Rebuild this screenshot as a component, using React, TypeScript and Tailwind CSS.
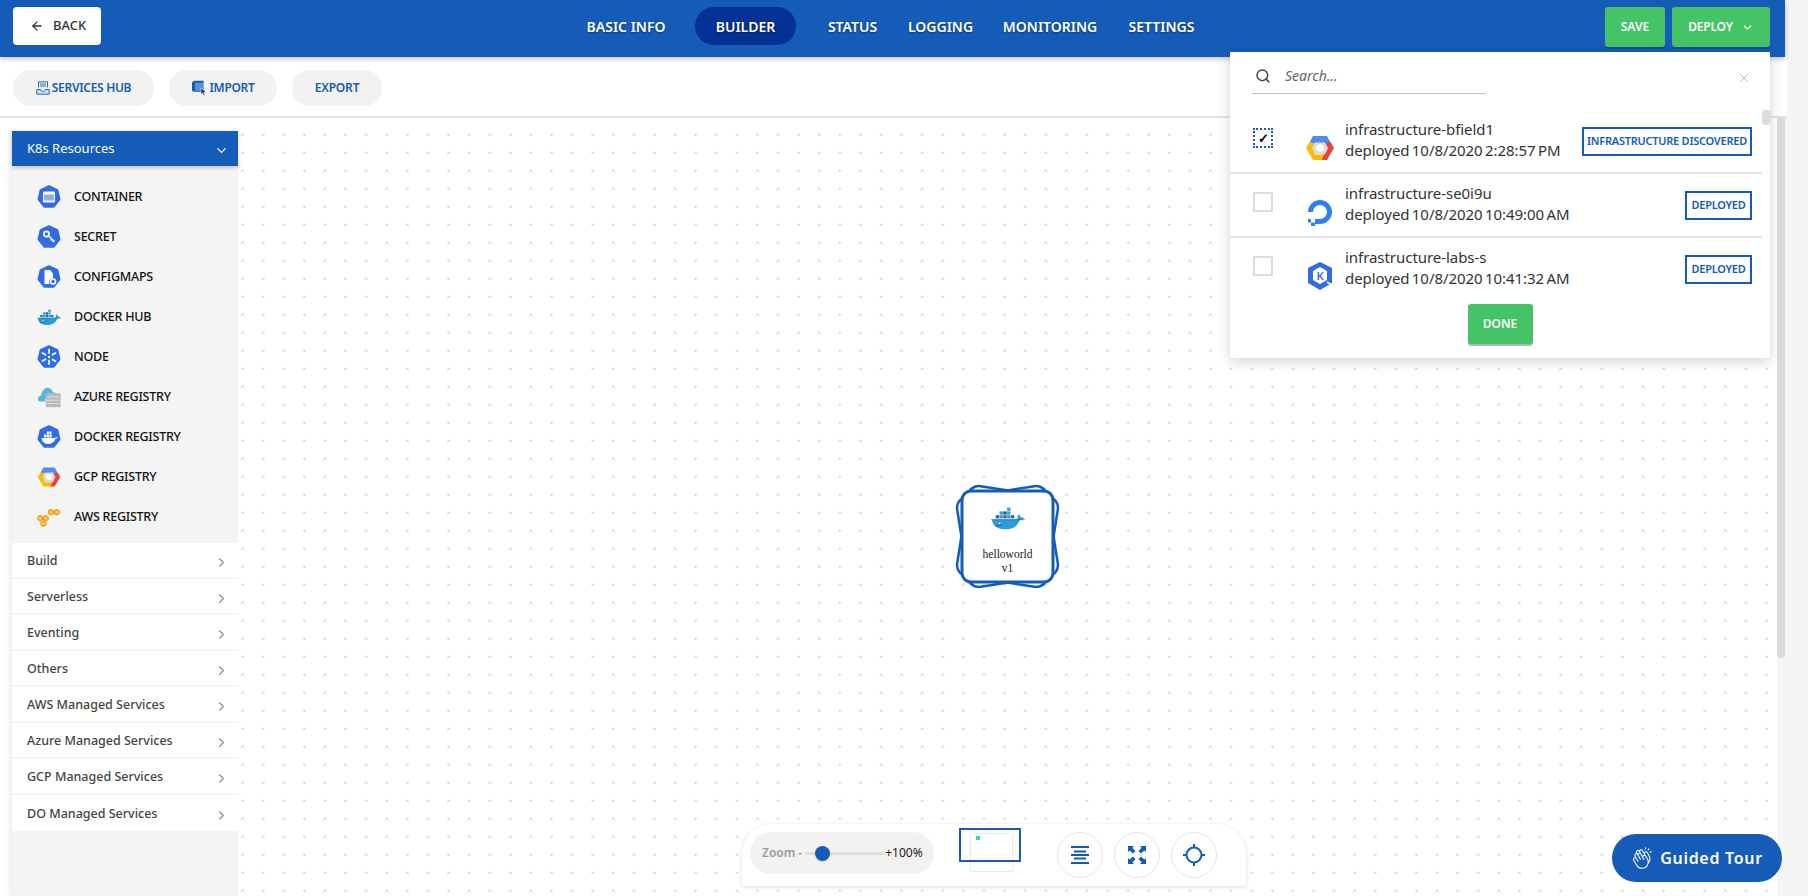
import React from "react";
import { ArrowLeft, ChevronDown, ChevronRight, Search, X } from "lucide-react";
import { PiHandsClappingLight } from "react-icons/pi";

const Hept = ({ children, size = 24 }: { children?: React.ReactNode; size?: number }) => (
  <svg width={size} height={size} viewBox="0 0 24 24">
    <polygon points="12,1.2 20.4,5.2 22.5,14.3 16.7,21.7 7.3,21.7 1.5,14.3 3.6,5.2" fill="#326ce5" stroke="#326ce5" strokeWidth="2" strokeLinejoin="round" />
    {children}
  </svg>
);

const Whale = ({ w = 26, h = 20 }: { w?: number; h?: number }) => (
  <svg width={w} height={h} viewBox="0 0 36 26">
    <g fill="#1f6fb5">
      <rect x="5" y="10" width="3.6" height="3.4" />
      <rect x="13" y="10" width="3.6" height="3.4" />
      <rect x="21" y="10" width="3.6" height="3.4" />
    </g>
    <g fill="#3a9ad9">
      <rect x="9" y="10" width="3.6" height="3.4" />
      <rect x="17" y="10" width="3.6" height="3.4" />
      <rect x="9" y="6" width="3.6" height="3.4" />
      <rect x="17" y="6" width="3.6" height="3.4" />
      <rect x="17" y="2" width="3.6" height="3.4" />
    </g>
    <rect x="13" y="6" width="3.6" height="3.4" fill="#1a5f9e" />
    <path d="M1 14.5h24c1.400 0 2.600-.4 3.400-1-.5-1.400-.4-3.400.7-4.500 1.300.9 2 2.200 2.100 3.400 1.300-.4 2.800-.1 3.800.7-1 1.600-2.800 2.200-4.600 2.100C28.400 21.500 23 25 15.500 25 7 25 1.500 21 1 14.500z" fill="#2d9cdb" />
    <circle cx="9" cy="18.500" r="1" fill="#fff" />
    <path d="M4 21c3 .5 6 0 8-1.500" stroke="#12507f" strokeWidth=".8" fill="none" />
    <path d="M0 14.800h36" stroke="#12507f" strokeWidth=".6" />
  </svg>
);

const Gcp = ({ size = 30 }: { size?: number }) => (
  <svg width={size} height={size} viewBox="0 0 30 30">
    <polygon points="8,3 22,3 25.500,9.500 20,11 10,11 4.500,9.500" fill="#4f8cf0" />
    <polygon points="25.500,9 29,15 22,27 16,27 20.500,16 20,10.500" fill="#ea4335" />
    <polygon points="4.500,9 1,15 8,27 17,27 19,21.500 10.500,21.500 9.500,10.500" fill="#fbbc05" />
    <polygon points="10,9.500 20,9.500 23,15 20,21.500 10,21.500 7,15" fill="#dcdcdc" />
    <circle cx="15" cy="15" r="3.800" fill="#fff" />
  </svg>
);

const Icons: Record<string, React.ReactNode> = {
  container: (
    <Hept>
      <rect x="6" y="6.500" width="12" height="11" rx="1.200" fill="#fff" />
      <path d="M8 9.500v6M10 9.500v6M12 9.500v6M14 9.500v6M16 9.500v6" stroke="#326ce5" strokeWidth="1.100" />
    </Hept>
  ),
  secret: (
    <Hept>
      <circle cx="9.500" cy="9" r="2.600" fill="none" stroke="#fff" strokeWidth="1.600" />
      <path d="M11.500 11l6 5.500M15 14l-1.400 1.600M17 15.500l-1.300 1.500" stroke="#fff" strokeWidth="1.500" />
    </Hept>
  ),
  config: (
    <Hept>
      <path d="M7.500 5h5.500l3 3.500v4.500a4 4 0 0 0-3.500 6H7.500z" fill="#fff" />
      <circle cx="16" cy="16.500" r="2.500" fill="none" stroke="#fff" strokeWidth="1.600" />
    </Hept>
  ),
  docker: <Whale w={24} h={18} />,
  node: (
    <Hept>
      <g stroke="#fff" strokeWidth="1.700" strokeLinecap="round">
        <path d="M12 4.500v3.500M12 15.500v3.500M5.500 8l3 1.800M15.500 14.500l3 1.800M5.500 16l3-1.800M15.500 9.800l3-1.800" />
      </g>
      <circle cx="12" cy="12" r="1.200" fill="#fff" />
    </Hept>
  ),
  azure: (
    <svg width="26" height="24" viewBox="0 0 26 24">
      <path d="M1 15c0-3 2-4.500 3.500-4.500C5 6 8 2 11 2c3 0 5.500 2 6.500 5 1.500 0 3 .5 4 1.500V14H9v3H4c-2 0-3-1-3-2z" fill="#5bb5dc" />
      <rect x="9.500" y="8" width="16" height="15" fill="#b5b5b5" />
      <path d="M9.500 12h16M9.500 15.500h16M9.500 19h16" stroke="#e8e8e8" strokeWidth=".9" />
      <path d="M13 8v15M17 8v15M21 8v15" stroke="#d8d8d8" strokeWidth=".5" />
    </svg>
  ),
  dockerReg: (
    <Hept>
      <path d="M4.500 13h12.500c1 0 1.500-.4 2-.8.7.3 1.500.3 2 .1-.6 1-1.500 1.500-2.500 1.500C17.500 17 15 19 11.500 19 7.500 19 4.800 16.500 4.500 13z" fill="#fff" />
      <path d="M7 9.500h2.200v3H7zM9.700 9.500h2.200v3H9.700zM12.400 9.500h2.200v3h-2.200zM9.700 6.500h2.200v2.500H9.700zM12.400 6.500h2.200v2.500h-2.200z" fill="#fff" />
    </Hept>
  ),
  gcp: <Gcp size={26} />,
  aws: (
    <svg width="26" height="24" viewBox="0 0 26 24">
      <g fill="#fbd08a" stroke="#f79400" strokeWidth="1.400">
        <path d="M12.500 5.500l2.500-1.500 2.500 1.500v2.500l-2.500 1.500-2.500-1.500zM19 5.500l2.500-1.500 2.500 1.500v2.500l-2.500 1.500-2.500-1.500zM1 12l2.500-1.500L6 12v2.500L3.500 16 1 14.500zM7 12l2.500-1.500L12 12v2.500L9.500 16 7 14.500zM4.500 18l2.500-1.500L9.500 18v2.500L7 22l-2.500-1.500z" />
      </g>
    </svg>
  ),
};

const items: [string, string][] = [
  ["container", "CONTAINER"],
  ["secret", "SECRET"],
  ["config", "CONFIGMAPS"],
  ["docker", "DOCKER HUB"],
  ["node", "NODE"],
  ["azure", "AZURE REGISTRY"],
  ["dockerReg", "DOCKER REGISTRY"],
  ["gcp", "GCP REGISTRY"],
  ["aws", "AWS REGISTRY"],
];

const groups = ["Build", "Serverless", "Eventing", "Others", "AWS Managed Services", "Azure Managed Services", "GCP Managed Services", "DO Managed Services"];

const nav: [string, string, boolean][] = [
  ["BASIC INFO", "w-[78px]", false],
  ["BUILDER", "w-[101px]", true],
  ["STATUS", "w-[53px]", false],
  ["LOGGING", "w-[63px]", false],
  ["MONITORING", "w-[96px]", false],
  ["SETTINGS", "w-[67px]", false],
];

const Infra = ({ icon, name, date, badge, wide, checked, border }: { icon: React.ReactNode; name: string; date: string; badge: string; wide?: boolean; checked?: boolean; border?: boolean }) => (
  <div className={`flex h-[64px] w-[532px] pl-[23px] ${border ? "border-b-2 border-[#e3e3e3]" : ""}`}>
    {checked ? (
      <div className="mt-[18px] flex h-[20px] w-[20px] items-center justify-center border-2 border-dotted border-[#155cb8] text-[13px] font-bold leading-none text-black">✓</div>
    ) : (
      <div className="mt-[18px] h-[20px] w-[20px] border-2 border-[#dcdcdc]" />
    )}
    <div className="mt-[23px] ml-[32px] flex h-[30px] w-[30px] items-center justify-center">{icon}</div>
    <div className="mt-[9px] ml-[10px] flex flex-col text-[15px] leading-[21px] tracking-[-0.05px] text-[#333] [word-spacing:-1.500px]">
      <span>{name}</span>
      <span>{date}</span>
    </div>
    <div className={`mt-[17px] ml-auto mr-[10px] flex h-[29px] items-center justify-center border-2 border-[#155cb8] text-[11px] font-semibold tracking-[-0.25px] text-[#155cb8] ${wide ? "w-[170px]" : "w-[67px]"}`}>
      {badge}
    </div>
  </div>
);

export default function App() {
  return (
    <div className="relative flex h-[896px] w-[1808px] flex-col overflow-hidden bg-[#f5f5f5] font-['Noto_Sans',sans-serif]">
      <header className="relative z-20 flex h-[57px] w-[1785px] shrink-0 items-start bg-[#155cb8] pt-[7px] shadow-[0_2px_5px_rgba(0,0,0,0.25)]">
        <button className="ml-[13px] flex h-[38px] w-[88px] items-center rounded-[4px] bg-white pl-[17px] text-[13px] font-medium text-[#333]">
          <ArrowLeft size={14} strokeWidth={2.2} className="mr-[9px]" />
          BACK
        </button>
        <nav className="ml-[486px] flex gap-[30px]">
          {nav.map(([t, w, a]) => (
            <div key={t} className={`flex h-[38px] items-center justify-center whitespace-nowrap text-[14px] font-semibold text-white [text-shadow:0_1px_2px_rgba(0,0,0,0.4)] ${w} ${a ? "rounded-[19px] bg-[#033294]" : ""}`}>
              {t}
            </div>
          ))}
        </nav>
        <button className="ml-auto flex h-[40px] w-[60px] items-center justify-center rounded-[3px] bg-[#45c367] text-[12px] font-semibold text-white shadow-[0_2px_0_#0d4a94]">SAVE</button>
        <button className="mr-[15px] ml-[7px] flex h-[40px] w-[98px] items-center justify-center gap-[8px] rounded-[3px] bg-[#45c367] text-[12px] font-semibold tracking-[-0.2px] text-white shadow-[0_2px_0_#0d4a94]">
          DEPLOY <ChevronDown size={13} strokeWidth={2.5} />
        </button>
      </header>

      <div className="flex h-[61px] w-[1787px] shrink-0 items-start gap-[15px] border-b-2 border-[#e3e3e3] bg-white pt-[13px] pl-[13px]">
        <button className="flex h-[36px] w-[141px] items-center justify-center gap-[2px] rounded-[18px] bg-[#f3f2f1] text-[12px] font-semibold tracking-[-0.3px] text-[#155cb8]">
          <svg width="14" height="14" viewBox="0 0 14 14" fill="none" stroke="#155cb8" strokeWidth="0.9">
            <path d="M.8 8.500v4.700h12.400V8.500H9.500c-.4 1.300-1.300 2-2.500 2s-2.100-.7-2.500-2z" fill="#cfe0f5" />
            <path d="M2.500 6.500V.8h9v5.700M4 3h6M4 5h6" />
          </svg>
          SERVICES HUB
        </button>
        <button className="flex h-[36px] w-[108px] items-center justify-center gap-[2px] rounded-[18px] bg-[#f3f2f1] text-[12px] font-semibold tracking-[-0.3px] text-[#155cb8]">
          <svg width="16" height="16" viewBox="0 0 16 16">
            <path d="M1 2.500L3 .8h9.500v11H3l-2-1z" fill="#155cb8" />
            <rect x="4" y="2.800" width="8" height="8" fill="#5a90d6" />
            <path d="M10 8l5 4-2.200.4 1.200 2.400-1.200.6-1.100-2.400-1.700 1.500z" fill="#10376e" stroke="#fff" strokeWidth=".5" />
          </svg>
          IMPORT
        </button>
        <button className="flex h-[36px] w-[90px] items-center justify-center rounded-[18px] bg-[#f3f2f1] text-[12px] font-semibold tracking-[-0.2px] text-[#155cb8]">EXPORT</button>
      </div>

      <main className="relative flex min-h-0 w-[1777px] flex-1 bg-white bg-[radial-gradient(circle,#d4d4d4_1px,transparent_1.3px)] bg-[length:20.6px_18px] bg-[position:5.8px_7.7px] pt-[13px] pl-[12px]">
        <aside className="flex w-[226px] flex-col bg-[#f4f4f4] shadow-[-4px_0_6px_rgba(0,0,0,0.06)]">
          <div className="z-10 flex h-[35px] items-center justify-between bg-[#155cb8] pr-[9px] pl-[15px] text-[13px] text-white shadow-[0_2px_4px_rgba(0,0,0,0.2)]">
            K8s Resources
            <ChevronDown size={15} strokeWidth={2} className="mt-[4px]" />
          </div>
          <div className="flex h-[377px] flex-col pt-[11px]">
            {items.map(([k, t]) => (
              <div key={t} className="flex h-[40px] items-center pl-[25px]">
                <span className="flex w-[24px] justify-center">{Icons[k]}</span>
                <span className="ml-[13px] text-[12.5px] font-medium tracking-[-0.25px] text-[#111]">{t}</span>
              </div>
            ))}
          </div>
          <div className="flex flex-col bg-white">
            {groups.map((g, i) => (
              <div key={g} className={`flex h-[36px] items-center justify-between pr-[9px] pl-[15px] text-[12.5px] font-medium text-[#444] ${i < groups.length - 1 ? "border-b-2 border-[#f4f4f4]" : ""}`}>
                <span className="mt-[3px]">{g}</span>
                <ChevronRight size={15} strokeWidth={1.7} className="mt-[5px] text-[#888]" />
              </div>
            ))}
          </div>
        </aside>

        {/* node on the free canvas */}
        <div className="absolute top-[366px] left-[955px] h-[105px] w-[105px]">
          <svg width="105" height="105" viewBox="0 0 105 105" className="absolute inset-0 overflow-visible">
            <g fill="none" stroke="#155cb8" strokeWidth="2.500">
              <rect x="7" y="7" width="91" height="91" rx="11" transform="rotate(9 52.500 52.500)" />
              <rect x="7" y="7" width="91" height="91" rx="11" transform="rotate(-9 52.500 52.500)" />
            </g>
            <rect x="7" y="7" width="91" height="91" rx="9" fill="#fff" stroke="#155cb8" strokeWidth="3" />
          </svg>
          <div className="relative flex h-full flex-col items-center pt-[21px] font-['Liberation_Serif',serif] text-[11.500px] leading-[14px] text-[#222]">
            <Whale w={34} h={26} />
            <span className="mt-[16px]">helloworld</span>
            <span>v1</span>
          </div>
        </div>

        {/* zoom bar */}
        <div className="absolute top-[706px] left-[742px] flex h-[62px] w-[504px] items-start rounded-t-[30px] bg-white pt-[8px] pl-[8px] shadow-[0_1px_4px_rgba(0,0,0,0.15)]">
          <div className="flex h-[42px] w-[184px] items-center rounded-[21px] bg-[#f3f2f1] pl-[12px] text-[12px]">
            <span className="font-semibold text-[#999]">Zoom -</span>
            <div className="relative ml-[3px] h-[3px] w-[80px] bg-[#e0e0e0]">
              <span className="absolute top-[-6px] left-[10px] h-[15px] w-[15px] rounded-full bg-[#155cb8] shadow" />
            </div>
            <span className="text-[#222]">+100%</span>
          </div>
          <div className="relative ml-[25px] h-[39px] w-[62px]">
            <div className="absolute top-[2px] left-[12px] h-[37px] w-[41px] bg-white shadow-[0_0_2px_rgba(0,0,0,0.25)]" />
            <div className="absolute inset-x-0 top-[-4px] h-[34px] border-2 border-[#155cb8]" />
            <div className="absolute top-[4px] left-[17px] h-[4px] w-[4px] bg-[#45cdbf]" />
          </div>
          <button className="ml-[36px] flex h-[46px] w-[46px] items-center justify-center rounded-full border border-[#e6e6e6]">
            <svg width="20" height="18" viewBox="0 0 20 18" stroke="#155cb8" strokeWidth="2"><path d="M1 1h18M4 5.500h12M1 9h18M4 12.500h12M1 17h18" /></svg>
          </button>
          <button className="ml-[11px] flex h-[46px] w-[46px] items-center justify-center rounded-full border border-[#e6e6e6]">
            <svg width="18" height="18" viewBox="0 0 18 18" fill="#155cb8"><path d="M0 0h6L4.400 1.700 7.500 5 5 7.500 1.700 4.400 0 6zM18 0v6l-1.700-1.600L13 7.500 10.500 5l3.100-3.300L12 0zM0 18v-6l1.700 1.600L5 10.500 7.500 13l-3.100 3.300L6 18zM18 18h-6l1.600-1.700L10.500 13l2.500-2.500 3.300 3.100L18 12z" /></svg>
          </button>
          <button className="ml-[11px] flex h-[46px] w-[46px] items-center justify-center rounded-full border border-[#e6e6e6]">
            <svg width="22" height="22" viewBox="0 0 22 22" fill="none" stroke="#155cb8" strokeWidth="2"><circle cx="11" cy="11" r="7.500" /><path d="M11 0v4M11 18v4M0 11h4M18 11h4" /></svg>
          </button>
        </div>

        {/* page scrollbar */}
        <div className="absolute top-0 left-[1777px] h-[540px] w-[8px] rounded-b-[4px] bg-[#dadada]" />
      </main>

      {/* deploy dropdown */}
      <div className="absolute top-[52px] left-[1230px] z-30 flex h-[306px] w-[540px] flex-col bg-white shadow-[0_3px_12px_rgba(0,0,0,0.18)]">
        <div className="relative h-[58px] shrink-0">
          <div className="absolute top-[10px] left-[22px] flex h-[32px] w-[233px] items-center border-b-[1.500px] border-[#bdbdbd] pl-[3px]">
            <Search size={16} strokeWidth={2.2} className="mb-[4px] text-[#444]" />
            <span className="mb-[4px] ml-[14px] text-[14px] italic text-[#666]">Search...</span>
          </div>
          <X size={14} strokeWidth={1.4} className="absolute top-[19px] left-[507px] text-[#aaa]" />
        </div>
        <Infra icon={<Gcp size={32} />} name="infrastructure-bfield1" date="deployed 10/8/2020 2:28:57 PM" badge="INFRASTRUCTURE DISCOVERED" wide checked border />
        <Infra
          icon={
            <svg width="28" height="28" viewBox="0 0 28 28">
              <path d="M14 26v-5a7 7 0 1 0-7-7H2A12 12 0 1 1 14 26z" fill="#2f80f5" />
              <path d="M9 21h5v5H9zM5 24.500h4V28H5zM2 21h3v3.500H2z" fill="#2f80f5" />
            </svg>
          }
          name="infrastructure-se0i9u"
          date="deployed 10/8/2020 10:49:00 AM"
          badge="DEPLOYED"
          border
        />
        <Infra
          icon={
            <svg width="28" height="30" viewBox="0 0 28 30">
              <polygon points="14,1 26,7 26,22 14,29 2,22 2,7" fill="#326ce5" />
              <polygon points="14,6 21,10 21,19 14,23 7,19 7,10" fill="#fff" />
              <path d="M21 21l5 3" stroke="#fff" strokeWidth="1.500" />
              <text x="14" y="19" textAnchor="middle" fontSize="11" fontWeight="600" fill="#326ce5">K</text>
            </svg>
          }
          name="infrastructure-labs-s"
          date="deployed 10/8/2020 10:41:32 AM"
          badge="DEPLOYED"
        />
        <button className="mx-auto mt-[2px] flex h-[40px] w-[65px] items-center justify-center rounded-[3px] bg-[#45c367] text-[12px] font-semibold text-white shadow-[0_2px_0_#b5b5b5]">DONE</button>
        <div className="absolute top-[58px] right-[-1px] h-[15px] w-[9px] rounded-[4px] bg-[#dcdcdc]" />
      </div>

      {/* guided tour */}
      <button className="absolute top-[834px] left-[1612px] z-30 flex h-[48px] w-[170px] items-center justify-center gap-[7px] rounded-[24px] bg-[#155cb8] text-[16px] font-semibold tracking-[0.7px] text-white">
        <PiHandsClappingLight size={22} />
        Guided Tour
      </button>
    </div>
  );
}
